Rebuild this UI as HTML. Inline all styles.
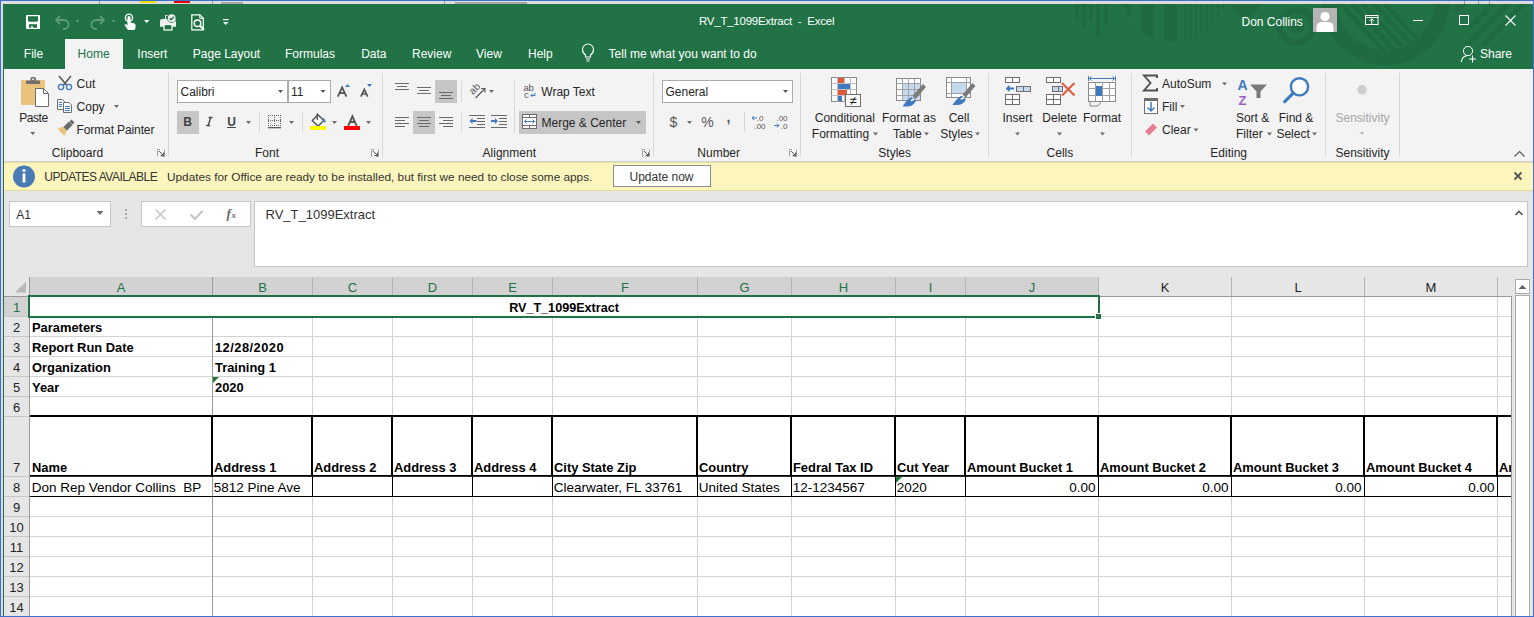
<!DOCTYPE html>
<html><head><meta charset="utf-8"><style>
*{margin:0;padding:0;box-sizing:border-box}
html,body{width:1534px;height:617px;overflow:hidden;background:#e6e6e6}
body{position:relative;font-family:"Liberation Sans",sans-serif;}
.t{position:absolute;white-space:pre}
.r{position:absolute}
svg{position:absolute;left:0;top:0;overflow:visible}
</style></head><body>
<div class="r" style="left:0px;top:0px;width:1534px;height:617px;background:#3f6fcf;"></div>
<div class="r" style="left:1px;top:1px;width:1532px;height:615px;background:#dcdcdc;"></div>
<div class="r" style="left:99px;top:1px;width:1px;height:3px;background:#9a9a9a;"></div>
<div class="r" style="left:212px;top:1px;width:1px;height:3px;background:#9a9a9a;"></div>
<div class="r" style="left:444px;top:1px;width:1px;height:3px;background:#9a9a9a;"></div>
<div class="r" style="left:1464px;top:1px;width:1px;height:3px;background:#9a9a9a;"></div>
<div class="r" style="left:1478px;top:1px;width:1px;height:3px;background:#9a9a9a;"></div>
<div class="r" style="left:1489px;top:1px;width:1px;height:3px;background:#9a9a9a;"></div>
<div class="r" style="left:140px;top:1px;width:16px;height:2px;background:#e8e000;"></div>
<div class="r" style="left:174px;top:1px;width:16px;height:2px;background:#e00000;"></div>
<div class="r" style="left:221px;top:2px;width:22px;height:2px;background:#a6a6a6;"></div>
<div class="r" style="left:455px;top:2px;width:72px;height:2px;background:#a6a6a6;"></div>
<div class="r" style="left:3px;top:4px;width:1530px;height:612px;background:#e6e6e6;"></div>
<div class="r" style="left:3px;top:4px;width:1px;height:612px;background:#217346;"></div>
<div class="r" style="left:3px;top:4px;width:1530px;height:65px;background:#217346;"></div>
<svg width="1534" height="69" style="clip-path:inset(4px 1px 0 3px)"><defs><clipPath id="cring"><circle cx="1386" cy="1" r="50"/></clipPath></defs><g fill="#1f6a40"><rect x="1075" y="4" width="4" height="16" /><rect x="1082" y="4" width="4" height="24" /><rect x="1089" y="4" width="4" height="17" /><rect x="1096" y="4" width="4" height="33" /><rect x="1104" y="4" width="4" height="21" /><rect x="1164" y="4" width="13" height="37" /><polygon points="1123,4 1131,4 1130,18" /><polygon points="1141,4 1154,4 1154,38 1141,31" /><rect x="1184.5" y="4" width="1.8" height="36" /><rect x="1189.5" y="4" width="1.8" height="35.5" /><rect x="1195" y="4" width="1.8" height="33" /><rect x="1200.5" y="4" width="1.8" height="30" /><rect x="1206" y="4" width="1.8" height="26" /><rect x="1211.5" y="4" width="1.8" height="22" /><rect x="1217" y="4" width="1.8" height="14" /><rect x="1222" y="4" width="1.8" height="6" /><circle cx="1245.5" cy="2.6" r="13.8" /><circle cx="1296.6" cy="26.3" r="16.5" fill="none" stroke="#1f6a40" stroke-width="6.5"/><circle cx="1296.6" cy="26.3" r="7" /><circle cx="1386" cy="1" r="56.5" fill="none" stroke="#1f6a40" stroke-width="15"/><polygon points="1338,4 1344,4 1388,52 1382,52" clip-path="url(#cring)"/><polygon points="1349,4 1355,4 1399,52 1393,52" clip-path="url(#cring)"/><polygon points="1360,4 1366,4 1410,52 1404,52" clip-path="url(#cring)"/><polygon points="1371,4 1377,4 1421,52 1415,52" clip-path="url(#cring)"/><polygon points="1382,4 1388,4 1432,52 1426,52" clip-path="url(#cring)"/><path d="M1455,12 L1470,-3" stroke="#1f6a40" stroke-width="5.5"/><path d="M1470,27 L1500,-3" stroke="#1f6a40" stroke-width="5.5"/><path d="M1467,45 L1513,-1" stroke="#1f6a40" stroke-width="5.5"/><path d="M1483,45 L1530,-2" stroke="#1f6a40" stroke-width="5.5"/></g></svg>
<svg width="1534" height="69"><rect x="26" y="15" width="14" height="14" rx="0.8" fill="#fff"/><path d="M28,16.2 h10 v4.6 l-1,1 h-8 l-1,-1 z" fill="#217346"/><rect x="29" y="24.2" width="8" height="3.6" fill="#217346"/><rect x="31" y="26.2" width="1.8" height="1.8" fill="#fff"/><path d="M57,20 h7 a4.5,4.5 0 0 1 0,9 h-1" fill="none" stroke="#5f9c78" stroke-width="1.8"/><path d="M60,16 l-4,4 l4,4" fill="none" stroke="#5f9c78" stroke-width="1.8"/><path d="M75.5,20 h4 l-2,2.5z" fill="#5f9c78"/><path d="M103,20 h-7 a4.5,4.5 0 0 0 0,9 h1" fill="none" stroke="#5f9c78" stroke-width="1.8"/><path d="M100,16 l4,4 l-4,4" fill="none" stroke="#5f9c78" stroke-width="1.8"/><path d="M111.5,20 h4 l-2,2.5z" fill="#5f9c78"/><circle cx="129" cy="17.7" r="3.6" fill="none" stroke="#fff" stroke-width="1.4"/><path d="M127.5,17.5 a1.5,1.5 0 0 1 3,0 v5 l4,1 q1,0.3 1,1.5 v3 l-1,2 h-6.5 l-3.5,-5 l1,-1 l2,1.3 z" fill="#fff"/><path d="M144,20 h5.5 l-2.75,3z" fill="#fff"/><path d="M160,21 q0,-2 2,-2 h12 q2,0 2,2 v5.8 h-16 z" fill="#eee"/><rect x="164" y="24.5" width="8" height="5.5" fill="#217346" stroke="#fff" stroke-width="1.2"/><path d="M165.5,19 v-3.5 h2" fill="none" stroke="#fff" stroke-width="1"/><circle cx="171.7" cy="18.2" r="4.6" fill="#217346"/><circle cx="171.7" cy="18.2" r="3.9" fill="#eee"/><path d="M169.6,18.3 l1.5,1.5 l2.8,-3" fill="none" stroke="#217346" stroke-width="1.3"/><path d="M191.8,14.8 h8 l3.5,3.5 v11.5 h-11.5 z" fill="none" stroke="#fff" stroke-width="1.2"/><path d="M199.8,14.8 v3.5 h3.5" fill="none" stroke="#fff" stroke-width="1"/><circle cx="197.5" cy="23.2" r="3.3" fill="#217346" stroke="#fff" stroke-width="1.5"/><path d="M200,25.8 l4,4" stroke="#fff" stroke-width="2"/><rect x="223" y="19" width="5.5" height="1.2" fill="#fff"/><path d="M223,22 h5.5 l-2.75,3z" fill="#fff"/><rect x="1313" y="8" width="24" height="24" fill="#b4b4b4"/><circle cx="1325" cy="16.5" r="4.6" fill="#fff"/><path d="M1316.5,32 v-5 q0,-4.5 5,-5 h7 q5,0.5 5,5 v5 z" fill="#fff"/><rect x="1365.5" y="15.5" width="12.5" height="9" fill="none" stroke="#fff" stroke-width="1"/><path d="M1365.5,17.5 h12.5" stroke="#fff" stroke-width="1"/><path d="M1371.75,24 v-5 M1369.5,21 l2.25,-2.25 l2.25,2.25" fill="none" stroke="#fff" stroke-width="1"/><path d="M1413,20.5 h10" stroke="#fff" stroke-width="1"/><rect x="1459.5" y="15.5" width="9" height="9" fill="none" stroke="#fff" stroke-width="1"/><path d="M1505.5,15.5 l10,10 M1515.5,15.5 l-10,10" stroke="#fff" stroke-width="1.1"/><circle cx="1468" cy="51" r="4.6" fill="none" stroke="#fff" stroke-width="1"/><path d="M1461.3,62 q0.5,-5.5 6,-6.5" fill="none" stroke="#fff" stroke-width="1.1"/><path d="M1469,59 h7 M1472.5,55.5 v7" stroke="#fff" stroke-width="1.1"/><path d="M585.5,57 v-2 q-3,-2 -3,-5.5 a5.5,5.5 0 0 1 11,0 q0,3.5 -3,5.5 v2 z" fill="none" stroke="#fff" stroke-width="1.1"/><path d="M586,59 h4 M586.5,61 h3" stroke="#fff" stroke-width="1"/></svg>
<div class="t" style="top:16.27px;font-size:11.5px;line-height:11.5px;color:#ffffff;left:699px;letter-spacing:-0.25px;">RV_T_1099Extract  -  Excel</div>
<div class="t" style="top:15.84px;font-size:12px;line-height:12px;color:#ffffff;left:1241.5px;">Don Collins</div>
<div class="r" style="left:65px;top:39px;width:58px;height:30px;background:#f3f3f3;"></div>
<div class="t" style="top:47.84px;font-size:12px;line-height:12px;color:#ffffff;left:23.8px;">File</div>
<div class="t" style="top:47.84px;font-size:12px;line-height:12px;color:#ffffff;left:137.3px;">Insert</div>
<div class="t" style="top:47.84px;font-size:12px;line-height:12px;color:#ffffff;left:192.8px;">Page Layout</div>
<div class="t" style="top:47.84px;font-size:12px;line-height:12px;color:#ffffff;left:285px;">Formulas</div>
<div class="t" style="top:47.84px;font-size:12px;line-height:12px;color:#ffffff;left:361.2px;">Data</div>
<div class="t" style="top:47.84px;font-size:12px;line-height:12px;color:#ffffff;left:412px;">Review</div>
<div class="t" style="top:47.84px;font-size:12px;line-height:12px;color:#ffffff;left:476px;">View</div>
<div class="t" style="top:47.84px;font-size:12px;line-height:12px;color:#ffffff;left:528px;">Help</div>
<div class="t" style="top:47.84px;font-size:12px;line-height:12px;color:#ffffff;left:608.6px;">Tell me what you want to do</div>
<div class="t" style="top:47.84px;font-size:12px;line-height:12px;color:#ffffff;left:1480px;">Share</div>
<div class="t" style="top:47.84px;font-size:12px;line-height:12px;color:#217346;left:77.6px;">Home</div>
<div class="r" style="left:4px;top:69px;width:1529px;height:92px;background:#f3f3f3;"></div>
<div class="r" style="left:4px;top:161px;width:1529px;height:1px;background:#d2d2d2;"></div>
<div class="r" style="left:4px;top:162px;width:1529px;height:28px;background:#fcf6bd;"></div>
<div class="r" style="left:4px;top:162px;width:1529px;height:1px;background:#e6e0a6;"></div>
<div class="r" style="left:4px;top:190px;width:1529px;height:1px;background:#e3dc9c;"></div>
<svg width="1534" height="200"><rect x="168" y="73" width="1" height="84" fill="#d8d8d8"/><rect x="382" y="73" width="1" height="84" fill="#d8d8d8"/><rect x="653" y="73" width="1" height="84" fill="#d8d8d8"/><rect x="800" y="73" width="1" height="84" fill="#d8d8d8"/><rect x="988" y="73" width="1" height="84" fill="#d8d8d8"/><rect x="1131" y="73" width="1" height="84" fill="#d8d8d8"/><rect x="1325" y="73" width="1" height="84" fill="#d8d8d8"/><rect x="1399" y="73" width="1" height="84" fill="#d8d8d8"/><rect x="259" y="112" width="1" height="20" fill="#d8d8d8"/><rect x="302" y="112" width="1" height="20" fill="#d8d8d8"/><rect x="461" y="81" width="1" height="21" fill="#d8d8d8"/><rect x="461" y="112" width="1" height="21" fill="#d8d8d8"/><rect x="514" y="80" width="1" height="53" fill="#d8d8d8"/><rect x="744" y="112" width="1" height="20" fill="#d8d8d8"/><path d="M157.5,149.5 h7 v7 h-7 z" fill="none" stroke="#8a8a8a" stroke-width="0.8" stroke-dasharray="2.5 4.5 7 0"/><path d="M159,151 l4.5,4.5 M163.5,152.5 v3 h-3" fill="none" stroke="#555" stroke-width="1"/><path d="M371.5,149.5 h7 v7 h-7 z" fill="none" stroke="#8a8a8a" stroke-width="0.8" stroke-dasharray="2.5 4.5 7 0"/><path d="M373,151 l4.5,4.5 M377.5,152.5 v3 h-3" fill="none" stroke="#555" stroke-width="1"/><path d="M642.5,149.5 h7 v7 h-7 z" fill="none" stroke="#8a8a8a" stroke-width="0.8" stroke-dasharray="2.5 4.5 7 0"/><path d="M644,151 l4.5,4.5 M648.5,152.5 v3 h-3" fill="none" stroke="#555" stroke-width="1"/><path d="M789.5,149.5 h7 v7 h-7 z" fill="none" stroke="#8a8a8a" stroke-width="0.8" stroke-dasharray="2.5 4.5 7 0"/><path d="M791,151 l4.5,4.5 M795.5,152.5 v3 h-3" fill="none" stroke="#555" stroke-width="1"/><rect x="21" y="80" width="24" height="25" rx="1.5" fill="#e9c27b"/><rect x="26" y="80.5" width="14" height="3.5" rx="0.5" fill="#707070"/><rect x="30.5" y="77" width="5.5" height="4" rx="1.5" fill="#707070"/><circle cx="33.2" cy="79.2" r="1" fill="#f3f3f3"/><path d="M35.5,88.5 h8 l5,5 v13 h-13 z" fill="#fff" stroke="#6e6e6e" stroke-width="1"/><path d="M43.5,88.5 v5 h5" fill="none" stroke="#6e6e6e" stroke-width="1"/><path d="M30.2,132 h5 l-2.5,3 z" fill="#6a6a6a"/><path d="M59,76 l7.5,9 M71,76 l-7.5,9" stroke="#5a5a5a" stroke-width="1.6"/><circle cx="61" cy="87" r="2.6" fill="#f3f3f3" stroke="#3f7ac0" stroke-width="1.3"/><circle cx="69" cy="87" r="2.6" fill="#f3f3f3" stroke="#3f7ac0" stroke-width="1.3"/><path d="M57.5,99.5 h5 l2,2 v8 h-7 z" fill="#fff" stroke="#6e6e6e" stroke-width="1"/><path d="M63.5,102.5 h5.5 l2.5,2.5 v7.5 h-8 z" fill="#fff" stroke="#6e6e6e" stroke-width="1"/><rect x="59" y="102" width="3" height="1" fill="#3f7ac0"/><rect x="59" y="104" width="3" height="1" fill="#3f7ac0"/><rect x="59" y="106" width="3" height="1" fill="#3f7ac0"/><rect x="65" y="106" width="5" height="1" fill="#3f7ac0"/><rect x="65" y="108" width="5" height="1" fill="#3f7ac0"/><rect x="65" y="110" width="5" height="1" fill="#3f7ac0"/><path d="M114,105 h5 l-2.5,3 z" fill="#6a6a6a"/><path d="M57.5,129 l6,-2.5 l3.5,3.5 l-2.5,6 z" fill="#e9c27b"/><path d="M63.5,127 l5.5,-5.5 l3.5,3.5 l-5.5,5.5 z" fill="#6a6a6a"/><path d="M69.5,121.5 l2,-2 l3,3 l-2,2 z" fill="#6a6a6a"/><rect x="177.5" y="80.5" width="110" height="22" fill="#fff" stroke="#ababab"/><rect x="288.5" y="80.5" width="42" height="22" fill="#fff" stroke="#ababab"/><path d="M278,90 h5 l-2.5,3 z" fill="#555"/><path d="M320.5,90 h5 l-2.5,3 z" fill="#555"/><path d="M337.8,96.7 l4.3,-9.4 l4.3,9.4 M339.5,93.2 h5.2" fill="none" stroke="#555" stroke-width="1.8"/><path d="M345,87 l2.5,-3 l2.5,3 z" fill="#3f7ac0"/><path d="M360.9,96.7 l3.4,-7.3 l3.4,7.3 M362.3,94 h4" fill="none" stroke="#555" stroke-width="1.7"/><path d="M367,84 h5 l-2.5,3 z" fill="#3f7ac0"/><rect x="177" y="111" width="22" height="23" fill="#c6c6c6"/><path d="M246,121 h5 l-2.5,3 z" fill="#6a6a6a"/><rect x="268" y="115" width="1" height="1" fill="#666"/><rect x="270" y="115" width="1" height="1" fill="#666"/><rect x="272" y="115" width="1" height="1" fill="#666"/><rect x="274" y="115" width="1" height="1" fill="#666"/><rect x="276" y="115" width="1" height="1" fill="#666"/><rect x="278" y="115" width="1" height="1" fill="#666"/><rect x="280" y="115" width="1" height="1" fill="#666"/><rect x="268" y="120" width="1" height="1" fill="#666"/><rect x="270" y="120" width="1" height="1" fill="#666"/><rect x="272" y="120" width="1" height="1" fill="#666"/><rect x="274" y="120" width="1" height="1" fill="#666"/><rect x="276" y="120" width="1" height="1" fill="#666"/><rect x="278" y="120" width="1" height="1" fill="#666"/><rect x="280" y="120" width="1" height="1" fill="#666"/><rect x="268" y="125" width="1" height="1" fill="#666"/><rect x="270" y="125" width="1" height="1" fill="#666"/><rect x="272" y="125" width="1" height="1" fill="#666"/><rect x="274" y="125" width="1" height="1" fill="#666"/><rect x="276" y="125" width="1" height="1" fill="#666"/><rect x="278" y="125" width="1" height="1" fill="#666"/><rect x="280" y="125" width="1" height="1" fill="#666"/><rect x="268" y="117" width="1" height="1" fill="#666"/><rect x="268" y="119" width="1" height="1" fill="#666"/><rect x="268" y="121" width="1" height="1" fill="#666"/><rect x="268" y="123" width="1" height="1" fill="#666"/><rect x="274" y="117" width="1" height="1" fill="#666"/><rect x="274" y="119" width="1" height="1" fill="#666"/><rect x="274" y="121" width="1" height="1" fill="#666"/><rect x="274" y="123" width="1" height="1" fill="#666"/><rect x="280" y="117" width="1" height="1" fill="#666"/><rect x="280" y="119" width="1" height="1" fill="#666"/><rect x="280" y="121" width="1" height="1" fill="#666"/><rect x="280" y="123" width="1" height="1" fill="#666"/><rect x="268" y="127" width="13" height="1.3" fill="#5a5a5a"/><path d="M289,121 h5 l-2.5,3 z" fill="#6a6a6a"/><path d="M312.3,120.5 l5.7,-5.7 l5.7,5.7 l-5.7,5.7 z" fill="#fff" stroke="#505050" stroke-width="1.4"/><path d="M317.2,113.5 v6.5" stroke="#505050" stroke-width="1.4"/><path d="M323,118 q3,1 2.5,5 q-1.5,-1.5 -2.5,-2 z" fill="#3f7ac0"/><rect x="310" y="126" width="16" height="4" fill="#ffff00"/><path d="M332,121 h5 l-2.5,3 z" fill="#6a6a6a"/><path d="M348.2,125.8 l4.2,-9.4 l4.2,9.4 M349.9,122 h5" fill="none" stroke="#555" stroke-width="1.9"/><rect x="344" y="126" width="16" height="4" fill="#ff0000"/><path d="M366,121 h5 l-2.5,3 z" fill="#6a6a6a"/><rect x="395" y="83" width="14" height="1" fill="#6a6a6a"/><rect x="397" y="86" width="10" height="1" fill="#6a6a6a"/><rect x="395" y="89" width="14" height="1" fill="#6a6a6a"/><rect x="417" y="87" width="14" height="1" fill="#6a6a6a"/><rect x="419" y="90" width="10" height="1" fill="#6a6a6a"/><rect x="417" y="93" width="14" height="1" fill="#6a6a6a"/><rect x="435" y="80" width="22" height="23" fill="#c6c6c6"/><rect x="439" y="92" width="14" height="1" fill="#6a6a6a"/><rect x="441" y="95" width="10" height="1" fill="#6a6a6a"/><rect x="439" y="98" width="14" height="1" fill="#6a6a6a"/><rect x="413" y="111" width="22" height="23" fill="#c6c6c6"/><rect x="395" y="117" width="14" height="1" fill="#6a6a6a"/><rect x="395" y="120" width="10" height="1" fill="#6a6a6a"/><rect x="395" y="123" width="14" height="1" fill="#6a6a6a"/><rect x="395" y="126" width="10" height="1" fill="#6a6a6a"/><rect x="417" y="117" width="14" height="1" fill="#6a6a6a"/><rect x="419" y="120" width="10" height="1" fill="#6a6a6a"/><rect x="417" y="123" width="14" height="1" fill="#6a6a6a"/><rect x="419" y="126" width="10" height="1" fill="#6a6a6a"/><rect x="439" y="117" width="14" height="1" fill="#6a6a6a"/><rect x="443" y="120" width="10" height="1" fill="#6a6a6a"/><rect x="439" y="123" width="14" height="1" fill="#6a6a6a"/><rect x="443" y="126" width="10" height="1" fill="#6a6a6a"/><text x="0" y="0" transform="translate(473,95) rotate(-45)" font-family="Liberation Sans" font-size="10" fill="#555">ab</text><path d="M475.5,98 l9,-9 M481,88.5 h4 v4" fill="none" stroke="#555" stroke-width="1.1"/><path d="M489,90 h5 l-2.5,3 z" fill="#6a6a6a"/><rect x="469" y="115" width="16" height="1" fill="#6a6a6a"/><rect x="477" y="118" width="8" height="1" fill="#6a6a6a"/><rect x="477" y="121" width="8" height="1" fill="#6a6a6a"/><rect x="477" y="124" width="8" height="1" fill="#6a6a6a"/><rect x="469" y="127" width="16" height="1" fill="#6a6a6a"/><path d="M469.5,121 l3,-3 v2 h4 v2 h-4 v2 z" fill="#3f7ac0"/><rect x="491" y="115" width="16" height="1" fill="#6a6a6a"/><rect x="499" y="118" width="8" height="1" fill="#6a6a6a"/><rect x="499" y="121" width="8" height="1" fill="#6a6a6a"/><rect x="499" y="124" width="8" height="1" fill="#6a6a6a"/><rect x="491" y="127" width="16" height="1" fill="#6a6a6a"/><path d="M498,121 l-3,-3 v2 h-4 v2 h4 v2 z" fill="#3f7ac0"/><text x="523.5" y="91" font-family="Liberation Sans" font-size="9.5" fill="#555" letter-spacing="-0.3">ab</text><text x="524" y="98" font-family="Liberation Sans" font-size="9.5" fill="#555">c</text><path d="M535,93 v2.5 h-4 M532.5,93.8 l-1.5,1.7 l1.5,1.7" fill="none" stroke="#3f7ac0" stroke-width="1"/><rect x="519" y="111" width="127" height="23" fill="#c6c6c6"/><rect x="522.5" y="114.5" width="14" height="14" fill="#fff" stroke="#6e6e6e"/><path d="M522.5,117.5 h14 M522.5,125.5 h14 M529.5,114.5 v3 M529.5,125.5 v3" stroke="#6e6e6e" stroke-width="1"/><path d="M524.5,121.5 h10" stroke="#3f7ac0" stroke-width="1"/><path d="M526.5,119.5 l-2,2 l2,2 M532.5,119.5 l2,2 l-2,2" fill="none" stroke="#3f7ac0" stroke-width="1"/><path d="M636,121 h5 l-2.5,3 z" fill="#555"/><rect x="662.5" y="80.5" width="130" height="22" fill="#fff" stroke="#ababab"/><path d="M783,90 h5 l-2.5,3 z" fill="#555"/><path d="M687,121 h5 l-2.5,3 z" fill="#6a6a6a"/><text x="760" y="121" text-anchor="middle" font-family="Liberation Sans" font-size="8" fill="#555">.0</text><text x="760" y="128.5" text-anchor="middle" font-family="Liberation Sans" font-size="8" fill="#555">.00</text><path d="M757,118 h-5 M754,116 l-2,2 l2,2" fill="none" stroke="#3f7ac0" stroke-width="1"/><text x="782" y="121" text-anchor="middle" font-family="Liberation Sans" font-size="8" fill="#555">.00</text><text x="784" y="128.5" text-anchor="middle" font-family="Liberation Sans" font-size="8" fill="#555">.0</text><path d="M774,125.5 h5 M777,123.5 l2,2 l-2,2" fill="none" stroke="#3f7ac0" stroke-width="1"/><rect x="831.5" y="77.5" width="25" height="24" fill="#fff" stroke="#8a8a8a"/><path d="M831.5,83.5 h25" stroke="#bdbdbd" stroke-width="1"/><path d="M831.5,89.5 h25" stroke="#bdbdbd" stroke-width="1"/><path d="M831.5,95.5 h25" stroke="#bdbdbd" stroke-width="1"/><path d="M837.5,77.5 v24" stroke="#bdbdbd" stroke-width="1"/><path d="M844.5,77.5 v24" stroke="#bdbdbd" stroke-width="1"/><path d="M850.5,77.5 v24" stroke="#bdbdbd" stroke-width="1"/><rect x="838" y="78" width="6" height="5" fill="#e0593a"/><rect x="838" y="84" width="12" height="5" fill="#3f7ac0"/><rect x="838" y="90" width="9" height="5" fill="#e0593a"/><rect x="838" y="96" width="4" height="5" fill="#3f7ac0"/><rect x="845.5" y="94.5" width="15" height="12" fill="#fff" stroke="#6e6e6e"/><text x="853" y="105" text-anchor="middle" font-family="Liberation Sans" font-size="13" fill="#222">&#8800;</text><path d="M873,132.5 h5 l-2.5,3 z" fill="#6a6a6a"/><rect x="896.5" y="78.5" width="24" height="22" fill="#fff" stroke="#8a8a8a"/><rect x="902" y="84" width="18" height="16" fill="#c5d9ee"/><path d="M896.5,83.5 h24" stroke="#a0a0a0" stroke-width="1"/><path d="M896.5,89.5 h24" stroke="#a0a0a0" stroke-width="1"/><path d="M896.5,95.5 h24" stroke="#a0a0a0" stroke-width="1"/><path d="M902.5,78.5 v22" stroke="#a0a0a0" stroke-width="1"/><path d="M908.5,78.5 v22" stroke="#a0a0a0" stroke-width="1"/><path d="M914.5,78.5 v22" stroke="#a0a0a0" stroke-width="1"/><path d="M912.5,96 l10.5,-12 l3,3 l-10.5,12 z" fill="#7a7a7a"/><path d="M902.5,106.5 q4,-6.5 9,-9.5 l4.5,4 q-3,5.5 -9,5.5 z" fill="#3f7ac0"/><path d="M910.5,100 q1.5,-1.5 3,-1.5 l0.8,1.5 q-2,0.5 -3,1.5 z" fill="#fff"/><path d="M924,132.5 h5 l-2.5,3 z" fill="#6a6a6a"/><rect x="946.5" y="77.5" width="24" height="20" fill="#fff" stroke="#8a8a8a"/><rect x="951" y="82" width="15" height="11" fill="#c5d9ee"/><path d="M946.5,82.5 h24 M946.5,93.5 h24 M951.5,77.5 v20 M966.5,77.5 v20" stroke="#a0a0a0" stroke-width="1"/><path d="M962.5,94.5 l10,-11.5 l3,3 l-10,11.5 z" fill="#7a7a7a"/><path d="M952.5,105 q4,-6.5 9,-9.5 l4.5,4 q-3,5.5 -9,5.5 z" fill="#3f7ac0"/><path d="M960.5,98.5 q1.5,-1.5 3,-1.5 l0.8,1.5 q-2,0.5 -3,1.5 z" fill="#fff"/><path d="M975,132.5 h5 l-2.5,3 z" fill="#6a6a6a"/><rect x="1005.5" y="77.5" width="7" height="5" fill="#fff" stroke="#6e6e6e"/><rect x="1012.5" y="77.5" width="7" height="5" fill="#fff" stroke="#6e6e6e"/><rect x="1016.5" y="86.5" width="7" height="5" fill="#c5d9ee" stroke="#6e6e6e"/><rect x="1023.5" y="86.5" width="7" height="5" fill="#c5d9ee" stroke="#6e6e6e"/><path d="M1007,88.5 h7 M1009.5,86 l-2.5,2.5 l2.5,2.5" fill="none" stroke="#3f7ac0" stroke-width="1.8"/><rect x="1005.5" y="94.5" width="7" height="5" fill="#fff" stroke="#6e6e6e"/><rect x="1012.5" y="94.5" width="7" height="5" fill="#fff" stroke="#6e6e6e"/><rect x="1005.5" y="99.5" width="7" height="5" fill="#fff" stroke="#6e6e6e"/><rect x="1012.5" y="99.5" width="7" height="5" fill="#fff" stroke="#6e6e6e"/><path d="M1015,132.5 h5 l-2.5,3 z" fill="#6a6a6a"/><rect x="1046.5" y="77.5" width="7" height="5" fill="#fff" stroke="#6e6e6e"/><rect x="1053.5" y="77.5" width="7" height="5" fill="#fff" stroke="#6e6e6e"/><rect x="1052.5" y="86.5" width="6" height="5" fill="#c5d9ee" stroke="#6e6e6e"/><rect x="1058.5" y="86.5" width="4" height="5" fill="#c5d9ee" stroke="#6e6e6e"/><rect x="1046.5" y="94.5" width="7" height="5" fill="#fff" stroke="#6e6e6e"/><rect x="1053.5" y="94.5" width="7" height="5" fill="#fff" stroke="#6e6e6e"/><rect x="1046.5" y="99.5" width="7" height="5" fill="#fff" stroke="#6e6e6e"/><rect x="1053.5" y="99.5" width="7" height="5" fill="#fff" stroke="#6e6e6e"/><path d="M1062,83 l12.5,12.5 M1074.5,83 l-12.5,12.5" stroke="#e05a3a" stroke-width="2"/><path d="M1057,132.5 h5 l-2.5,3 z" fill="#6a6a6a"/><rect x="1088.5" y="82.5" width="27" height="19" fill="#fff" stroke="#8a8a8a"/><path d="M1088.5,88.5 h27 M1088.5,95.5 h27 M1095.5,82.5 v19 M1102.5,82.5 v19 M1109.5,82.5 v19" stroke="#a0a0a0" stroke-width="1"/><rect x="1096" y="86" width="6" height="10" fill="#3f7ac0"/><path d="M1090,102 v4 h8 l3,-4" fill="none" stroke="#8a8a8a"/><path d="M1088.5,76 v5 M1115.5,76 v5 M1089,78.5 h26 M1091.5,76.5 l-2,2 l2,2 M1112.5,76.5 l2,2 l-2,2" fill="none" stroke="#3f7ac0" stroke-width="1"/><path d="M1100,132.5 h5 l-2.5,3 z" fill="#6a6a6a"/><path d="M1157,78 v-2.5 h-13 l6.5,7.5 l-6.5,7.5 h13 v-2.5" fill="none" stroke="#505050" stroke-width="1.9"/><path d="M1222,82.5 h5 l-2.5,3 z" fill="#6a6a6a"/><rect x="1144.5" y="98.5" width="13" height="15" fill="#fff" stroke="#6e6e6e"/><rect x="1144" y="98" width="14" height="3" fill="#6e6e6e"/><path d="M1151,102 v9 M1147.5,107.5 l3.5,3.5 l3.5,-3.5" fill="none" stroke="#3f7ac0" stroke-width="1.5"/><path d="M1180,105 h5 l-2.5,3 z" fill="#6a6a6a"/><path d="M1145,131.5 l8,-8 l4,4 l-8,8 z" fill="#e87e93"/><path d="M1193.5,128.5 h5 l-2.5,3 z" fill="#6a6a6a"/><text x="1237.5" y="90" font-family="Liberation Sans" font-weight="bold" font-size="14" fill="#3f7ac0">A</text><text x="1238.5" y="104.5" font-family="Liberation Sans" font-weight="bold" font-size="13" fill="#9a5fc6">Z</text><path d="M1250,84.5 h17 l-6.5,7 v6.5 h-4 v-6.5 z" fill="#7a7a7a"/><path d="M1267,132.5 h5 l-2.5,3 z" fill="#6a6a6a"/><circle cx="1299.5" cy="86.8" r="8.6" fill="#fff" stroke="#3f7ac0" stroke-width="2.4"/><path d="M1293.2,93.2 l-8.5,8.5" stroke="#3f7ac0" stroke-width="3.2" stroke-linecap="round"/><path d="M1312,132.5 h5 l-2.5,3 z" fill="#6a6a6a"/><circle cx="1362" cy="89.8" r="4.8" fill="#cfcfcf"/><path d="M1359.5,132 h5 l-2.5,3 z" fill="#bdbdbd"/><path d="M1514.5,156.5 l5,-5 l5,5" fill="none" stroke="#555" stroke-width="1.1"/><circle cx="24" cy="176.5" r="11" fill="#4a7bb5"/><circle cx="24" cy="170.5" r="1.6" fill="#fff"/><rect x="22.6" y="173.5" width="2.8" height="9" fill="#fff"/><rect x="613.5" y="165.5" width="97" height="21" fill="#fff" stroke="#8f8f8f"/><path d="M1514.5,172.5 l7,7 M1521.5,172.5 l-7,7" stroke="#555" stroke-width="1.8"/></svg>
<div class="t" style="top:111.84px;font-size:12px;line-height:12px;color:#262626;left:19.2px;letter-spacing:-0.45px;">Paste</div>
<div class="t" style="top:77.84px;font-size:12px;line-height:12px;color:#262626;left:76.6px;">Cut</div>
<div class="t" style="top:100.84px;font-size:12px;line-height:12px;color:#262626;left:76.6px;">Copy</div>
<div class="t" style="top:123.84px;font-size:12px;line-height:12px;color:#262626;left:76.6px;letter-spacing:-0.12px;">Format Painter</div>
<div class="t" style="top:146.84px;font-size:12px;line-height:12px;color:#262626;left:-222.6px;width:600px;text-align:center;">Clipboard</div>
<div class="t" style="top:85.84px;font-size:12px;line-height:12px;color:#262626;left:180.5px;">Calibri</div>
<div class="t" style="top:85.84px;font-size:12px;line-height:12px;color:#262626;left:291px;">11</div>
<div class="t" style="top:115.84px;font-size:12px;line-height:12px;color:#444;font-weight:700;left:-112.5px;width:600px;text-align:center;">B</div>
<svg width="1534" height="200"><path d="M210.6,117.6 l-2.4,8 M208.6,117.6 h4 M206.2,125.6 h4" fill="none" stroke="#4a4a4a" stroke-width="1.5"/></svg>
<div class="t" style="top:115.84px;font-size:12px;line-height:12px;color:#444;font-weight:700;left:-68.5px;width:600px;text-align:center;text-decoration:underline;">U</div>
<div class="t" style="top:146.84px;font-size:12px;line-height:12px;color:#262626;left:-33px;width:600px;text-align:center;">Font</div>
<div class="t" style="top:85.84px;font-size:12px;line-height:12px;color:#262626;left:541.3px;">Wrap Text</div>
<div class="t" style="top:116.84px;font-size:12px;line-height:12px;color:#262626;left:541.5px;">Merge &amp; Center</div>
<div class="t" style="top:146.84px;font-size:12px;line-height:12px;color:#262626;left:209.3px;width:600px;text-align:center;">Alignment</div>
<div class="t" style="top:85.84px;font-size:12px;line-height:12px;color:#262626;left:665.5px;">General</div>
<div class="t" style="top:115.15px;font-size:14px;line-height:14px;color:#555;left:373.4px;width:600px;text-align:center;">$</div>
<div class="t" style="top:115.15px;font-size:14px;line-height:14px;color:#555;left:407.6px;width:600px;text-align:center;">%</div>
<div class="t" style="top:110.15px;font-size:14px;line-height:14px;color:#555;font-weight:700;left:428.5px;width:600px;text-align:center;">,</div>
<div class="t" style="top:146.84px;font-size:12px;line-height:12px;color:#262626;left:418.70000000000005px;width:600px;text-align:center;">Number</div>
<div class="t" style="top:111.84px;font-size:12px;line-height:12px;color:#262626;left:544.8px;width:600px;text-align:center;">Conditional</div>
<div class="t" style="top:127.84px;font-size:12px;line-height:12px;color:#262626;left:811.8px;">Formatting</div>
<div class="t" style="top:111.84px;font-size:12px;line-height:12px;color:#262626;left:609px;width:600px;text-align:center;">Format as</div>
<div class="t" style="top:127.84px;font-size:12px;line-height:12px;color:#262626;left:893px;">Table</div>
<div class="t" style="top:111.84px;font-size:12px;line-height:12px;color:#262626;left:659px;width:600px;text-align:center;">Cell</div>
<div class="t" style="top:127.84px;font-size:12px;line-height:12px;color:#262626;left:940.2px;">Styles</div>
<div class="t" style="top:146.84px;font-size:12px;line-height:12px;color:#262626;left:594.7px;width:600px;text-align:center;">Styles</div>
<div class="t" style="top:111.84px;font-size:12px;line-height:12px;color:#262626;left:717.5px;width:600px;text-align:center;">Insert</div>
<div class="t" style="top:111.84px;font-size:12px;line-height:12px;color:#262626;left:759.7px;width:600px;text-align:center;">Delete</div>
<div class="t" style="top:111.84px;font-size:12px;line-height:12px;color:#262626;left:802px;width:600px;text-align:center;">Format</div>
<div class="t" style="top:146.84px;font-size:12px;line-height:12px;color:#262626;left:759.9000000000001px;width:600px;text-align:center;">Cells</div>
<div class="t" style="top:77.84px;font-size:12px;line-height:12px;color:#262626;left:1162px;">AutoSum</div>
<div class="t" style="top:100.84px;font-size:12px;line-height:12px;color:#262626;left:1162px;">Fill</div>
<div class="t" style="top:123.84px;font-size:12px;line-height:12px;color:#262626;left:1162px;">Clear</div>
<div class="t" style="top:146.84px;font-size:12px;line-height:12px;color:#262626;left:928.7px;width:600px;text-align:center;">Editing</div>
<div class="t" style="top:111.84px;font-size:12px;line-height:12px;color:#262626;left:952.5999999999999px;width:600px;text-align:center;">Sort &amp;</div>
<div class="t" style="top:127.84px;font-size:12px;line-height:12px;color:#262626;left:1236px;">Filter</div>
<div class="t" style="top:111.84px;font-size:12px;line-height:12px;color:#262626;left:996px;width:600px;text-align:center;">Find &amp;</div>
<div class="t" style="top:127.84px;font-size:12px;line-height:12px;color:#262626;left:1276.4px;">Select</div>
<div class="t" style="top:111.84px;font-size:12px;line-height:12px;color:#a6a6a6;left:1062.5px;width:600px;text-align:center;">Sensitivity</div>
<div class="t" style="top:146.84px;font-size:12px;line-height:12px;color:#262626;left:1062.5px;width:600px;text-align:center;">Sensitivity</div>
<div class="t" style="top:171.34px;font-size:12px;line-height:12px;color:#333;left:44.3px;letter-spacing:-0.5px;">UPDATES AVAILABLE</div>
<div class="t" style="top:171.51px;font-size:11.8px;line-height:11.8px;color:#333;left:167px;">Updates for Office are ready to be installed, but first we need to close some apps.</div>
<div class="t" style="top:171.34px;font-size:12px;line-height:12px;color:#333;left:361.5px;width:600px;text-align:center;">Update now</div>
<svg width="1534" height="617"><rect x="9.5" y="201.5" width="101" height="25" fill="#fff" stroke="#c6c6c6"/><path d="M96.5,211 h7 l-3.5,4 z" fill="#6a6a6a"/><rect x="125" y="209.0" width="2" height="2" fill="#a8a8a8"/><rect x="125" y="213.0" width="2" height="2" fill="#a8a8a8"/><rect x="125" y="217.0" width="2" height="2" fill="#a8a8a8"/><rect x="141.5" y="201.5" width="109" height="25" fill="#fff" stroke="#c6c6c6"/><path d="M155.5,209.5 l10,10 M165.5,209.5 l-10,10" stroke="#c4c4c4" stroke-width="1.5"/><path d="M190.5,214.5 l4.5,4.5 l7.5,-8" fill="none" stroke="#c4c4c4" stroke-width="2.2"/><text x="226.5" y="218" font-family="Liberation Serif" font-style="italic" font-weight="bold" font-size="13" fill="#666">f</text><text x="231.5" y="218" font-family="Liberation Serif" font-style="italic" font-weight="bold" font-size="9" fill="#666">x</text><rect x="254.5" y="201.5" width="1273" height="65" fill="#fff" stroke="#c6c6c6"/><path d="M1515.5,215 l3.5,-3.5 l3.5,3.5" fill="none" stroke="#555" stroke-width="1.6"/><rect x="4" y="277" width="1507" height="19" fill="#e6e6e6"/><rect x="30" y="277" width="1068" height="18" fill="#d2d2d2"/><rect x="4" y="297" width="25" height="319" fill="#e6e6e6"/><rect x="4" y="297" width="25" height="19" fill="#d2d2d2"/><path d="M26,281.5 v11 h-11 z" fill="#b9b9b9"/><rect x="30" y="297" width="1481" height="319" fill="#fff"/><rect x="212" y="277" width="1" height="19" fill="#b4b4b4"/><rect x="312" y="277" width="1" height="19" fill="#b4b4b4"/><rect x="392" y="277" width="1" height="19" fill="#b4b4b4"/><rect x="472" y="277" width="1" height="19" fill="#b4b4b4"/><rect x="552" y="277" width="1" height="19" fill="#b4b4b4"/><rect x="697" y="277" width="1" height="19" fill="#b4b4b4"/><rect x="791" y="277" width="1" height="19" fill="#b4b4b4"/><rect x="895" y="277" width="1" height="19" fill="#b4b4b4"/><rect x="965" y="277" width="1" height="19" fill="#b4b4b4"/><rect x="1098" y="277" width="1" height="19" fill="#b4b4b4"/><rect x="1231" y="277" width="1" height="19" fill="#b4b4b4"/><rect x="1364" y="277" width="1" height="19" fill="#b4b4b4"/><rect x="1497" y="277" width="1" height="19" fill="#b4b4b4"/><rect x="4" y="316" width="25" height="1" fill="#c8c8c8"/><rect x="4" y="336" width="25" height="1" fill="#c8c8c8"/><rect x="4" y="356" width="25" height="1" fill="#c8c8c8"/><rect x="4" y="376" width="25" height="1" fill="#c8c8c8"/><rect x="4" y="396" width="25" height="1" fill="#c8c8c8"/><rect x="4" y="416" width="25" height="1" fill="#c8c8c8"/><rect x="4" y="476" width="25" height="1" fill="#c8c8c8"/><rect x="4" y="496" width="25" height="1" fill="#c8c8c8"/><rect x="4" y="516" width="25" height="1" fill="#c8c8c8"/><rect x="4" y="536" width="25" height="1" fill="#c8c8c8"/><rect x="4" y="556" width="25" height="1" fill="#c8c8c8"/><rect x="4" y="576" width="25" height="1" fill="#c8c8c8"/><rect x="4" y="596" width="25" height="1" fill="#c8c8c8"/><rect x="4" y="616" width="25" height="1" fill="#c8c8c8"/><rect x="29" y="277" width="1" height="339" fill="#9a9a9a"/><rect x="4" y="296" width="1507" height="1" fill="#9a9a9a"/><rect x="1511" y="296" width="1" height="320" fill="#9a9a9a"/><rect x="212" y="297" width="1" height="319" fill="#d4d4d4"/><rect x="312" y="297" width="1" height="319" fill="#d4d4d4"/><rect x="392" y="297" width="1" height="319" fill="#d4d4d4"/><rect x="472" y="297" width="1" height="319" fill="#d4d4d4"/><rect x="552" y="297" width="1" height="319" fill="#d4d4d4"/><rect x="697" y="297" width="1" height="319" fill="#d4d4d4"/><rect x="791" y="297" width="1" height="319" fill="#d4d4d4"/><rect x="895" y="297" width="1" height="319" fill="#d4d4d4"/><rect x="965" y="297" width="1" height="319" fill="#d4d4d4"/><rect x="1098" y="297" width="1" height="319" fill="#d4d4d4"/><rect x="1231" y="297" width="1" height="319" fill="#d4d4d4"/><rect x="1364" y="297" width="1" height="319" fill="#d4d4d4"/><rect x="1497" y="297" width="1" height="319" fill="#d4d4d4"/><rect x="30" y="316" width="1481" height="1" fill="#d4d4d4"/><rect x="30" y="336" width="1481" height="1" fill="#d4d4d4"/><rect x="30" y="356" width="1481" height="1" fill="#d4d4d4"/><rect x="30" y="376" width="1481" height="1" fill="#d4d4d4"/><rect x="30" y="396" width="1481" height="1" fill="#d4d4d4"/><rect x="30" y="416" width="1481" height="1" fill="#d4d4d4"/><rect x="30" y="476" width="1481" height="1" fill="#d4d4d4"/><rect x="30" y="496" width="1481" height="1" fill="#d4d4d4"/><rect x="30" y="516" width="1481" height="1" fill="#d4d4d4"/><rect x="30" y="536" width="1481" height="1" fill="#d4d4d4"/><rect x="30" y="556" width="1481" height="1" fill="#d4d4d4"/><rect x="30" y="576" width="1481" height="1" fill="#d4d4d4"/><rect x="30" y="596" width="1481" height="1" fill="#d4d4d4"/><rect x="30" y="616" width="1481" height="1" fill="#d4d4d4"/><rect x="212" y="277" width="1" height="339" fill="#9b9b9b"/><rect x="30" y="297" width="1068" height="19" fill="#fff"/><rect x="30" y="415" width="1481" height="2" fill="#000"/><rect x="30" y="475" width="1481" height="1" fill="#000"/><rect x="30" y="476" width="1481" height="1" fill="#333"/><rect x="30" y="496" width="1481" height="1" fill="#000"/><rect x="211" y="415" width="2" height="62" fill="#000"/><rect x="212" y="477" width="1" height="19" fill="#000"/><rect x="311" y="415" width="2" height="62" fill="#000"/><rect x="312" y="477" width="1" height="19" fill="#000"/><rect x="391" y="415" width="2" height="62" fill="#000"/><rect x="392" y="477" width="1" height="19" fill="#000"/><rect x="471" y="415" width="2" height="62" fill="#000"/><rect x="472" y="477" width="1" height="19" fill="#000"/><rect x="551" y="415" width="2" height="62" fill="#000"/><rect x="552" y="477" width="1" height="19" fill="#000"/><rect x="696" y="415" width="2" height="62" fill="#000"/><rect x="697" y="477" width="1" height="19" fill="#000"/><rect x="790" y="415" width="2" height="62" fill="#000"/><rect x="791" y="477" width="1" height="19" fill="#000"/><rect x="894" y="415" width="2" height="62" fill="#000"/><rect x="895" y="477" width="1" height="19" fill="#000"/><rect x="964" y="415" width="2" height="62" fill="#000"/><rect x="965" y="477" width="1" height="19" fill="#000"/><rect x="1097" y="415" width="2" height="62" fill="#000"/><rect x="1098" y="477" width="1" height="19" fill="#000"/><rect x="1230" y="415" width="2" height="62" fill="#000"/><rect x="1231" y="477" width="1" height="19" fill="#000"/><rect x="1363" y="415" width="2" height="62" fill="#000"/><rect x="1364" y="477" width="1" height="19" fill="#000"/><rect x="1496" y="415" width="2" height="62" fill="#000"/><rect x="1497" y="477" width="1" height="19" fill="#000"/><rect x="212" y="477" width="1" height="19" fill="#9b9b9b"/><path d="M213,377 h6 l-6,6 z" fill="#1f7a3a"/><path d="M896,477 h6 l-6,6 z" fill="#1f7a3a"/><rect x="28" y="295" width="1072" height="2" fill="#217346"/><rect x="28" y="295" width="2" height="23" fill="#217346"/><rect x="28" y="316" width="1067" height="2" fill="#217346"/><rect x="1098" y="295" width="2" height="18" fill="#217346"/><rect x="1095" y="313" width="6" height="6" fill="#fff"/><rect x="1096" y="314" width="5" height="5" fill="#217346"/><rect x="1515.5" y="279.5" width="14" height="14" fill="#fff" stroke="#ababab"/><path d="M1518.5,289 l4,-4 l4,4 z" fill="#606060"/><rect x="1515.5" y="295.5" width="14" height="330" fill="#fff" stroke="#ababab"/></svg>
<div class="t" style="top:208.84px;font-size:12px;line-height:12px;color:#333;left:16.2px;">A1</div>
<div class="t" style="top:207.60px;font-size:13px;line-height:13px;color:#333;left:265.5px;">RV_T_1099Extract</div>
<div class="t" style="top:281.00px;font-size:13px;line-height:13px;color:#217346;left:-179.0px;width:600px;text-align:center;">A</div>
<div class="t" style="top:281.00px;font-size:13px;line-height:13px;color:#217346;left:-37.5px;width:600px;text-align:center;">B</div>
<div class="t" style="top:281.00px;font-size:13px;line-height:13px;color:#217346;left:52.5px;width:600px;text-align:center;">C</div>
<div class="t" style="top:281.00px;font-size:13px;line-height:13px;color:#217346;left:132.5px;width:600px;text-align:center;">D</div>
<div class="t" style="top:281.00px;font-size:13px;line-height:13px;color:#217346;left:212.5px;width:600px;text-align:center;">E</div>
<div class="t" style="top:281.00px;font-size:13px;line-height:13px;color:#217346;left:325.0px;width:600px;text-align:center;">F</div>
<div class="t" style="top:281.00px;font-size:13px;line-height:13px;color:#217346;left:444.5px;width:600px;text-align:center;">G</div>
<div class="t" style="top:281.00px;font-size:13px;line-height:13px;color:#217346;left:543.5px;width:600px;text-align:center;">H</div>
<div class="t" style="top:281.00px;font-size:13px;line-height:13px;color:#217346;left:630.5px;width:600px;text-align:center;">I</div>
<div class="t" style="top:281.00px;font-size:13px;line-height:13px;color:#217346;left:732.0px;width:600px;text-align:center;">J</div>
<div class="t" style="top:281.00px;font-size:13px;line-height:13px;color:#222;left:865.0px;width:600px;text-align:center;">K</div>
<div class="t" style="top:281.00px;font-size:13px;line-height:13px;color:#222;left:998.0px;width:600px;text-align:center;">L</div>
<div class="t" style="top:281.00px;font-size:13px;line-height:13px;color:#222;left:1131.0px;width:600px;text-align:center;">M</div>
<div class="t" style="top:301.00px;font-size:13px;line-height:13px;color:#217346;left:-283.5px;width:600px;text-align:center;">1</div>
<div class="t" style="top:321.00px;font-size:13px;line-height:13px;color:#222;left:-283.5px;width:600px;text-align:center;">2</div>
<div class="t" style="top:341.00px;font-size:13px;line-height:13px;color:#222;left:-283.5px;width:600px;text-align:center;">3</div>
<div class="t" style="top:361.00px;font-size:13px;line-height:13px;color:#222;left:-283.5px;width:600px;text-align:center;">4</div>
<div class="t" style="top:381.00px;font-size:13px;line-height:13px;color:#222;left:-283.5px;width:600px;text-align:center;">5</div>
<div class="t" style="top:401.00px;font-size:13px;line-height:13px;color:#222;left:-283.5px;width:600px;text-align:center;">6</div>
<div class="t" style="top:461.00px;font-size:13px;line-height:13px;color:#222;left:-283.5px;width:600px;text-align:center;">7</div>
<div class="t" style="top:481.00px;font-size:13px;line-height:13px;color:#222;left:-283.5px;width:600px;text-align:center;">8</div>
<div class="t" style="top:501.00px;font-size:13px;line-height:13px;color:#222;left:-283.5px;width:600px;text-align:center;">9</div>
<div class="t" style="top:521.00px;font-size:13px;line-height:13px;color:#222;left:-283.5px;width:600px;text-align:center;">10</div>
<div class="t" style="top:541.00px;font-size:13px;line-height:13px;color:#222;left:-283.5px;width:600px;text-align:center;">11</div>
<div class="t" style="top:561.00px;font-size:13px;line-height:13px;color:#222;left:-283.5px;width:600px;text-align:center;">12</div>
<div class="t" style="top:581.00px;font-size:13px;line-height:13px;color:#222;left:-283.5px;width:600px;text-align:center;">13</div>
<div class="t" style="top:601.00px;font-size:13px;line-height:13px;color:#222;left:-283.5px;width:600px;text-align:center;">14</div>
<div class="t" style="top:302.33px;font-size:12.6px;line-height:12.6px;color:#000;font-weight:700;left:264px;width:600px;text-align:center;">RV_T_1099Extract</div>
<div class="t" style="top:322.08px;font-size:12.9px;line-height:12.9px;color:#000;font-weight:700;left:32px;">Parameters</div>
<div class="t" style="top:342.08px;font-size:12.9px;line-height:12.9px;color:#000;font-weight:700;left:32px;">Report Run Date</div>
<div class="t" style="top:342.08px;font-size:12.9px;line-height:12.9px;color:#000;font-weight:700;left:215px;letter-spacing:0.45px;">12/28/2020</div>
<div class="t" style="top:362.08px;font-size:12.9px;line-height:12.9px;color:#000;font-weight:700;left:32px;">Organization</div>
<div class="t" style="top:362.08px;font-size:12.9px;line-height:12.9px;color:#000;font-weight:700;left:215px;">Training 1</div>
<div class="t" style="top:382.08px;font-size:12.9px;line-height:12.9px;color:#000;font-weight:700;left:32px;">Year</div>
<div class="t" style="top:382.08px;font-size:12.9px;line-height:12.9px;color:#000;font-weight:700;left:215px;">2020</div>
<div class="t" style="top:462.08px;font-size:12.9px;line-height:12.9px;color:#000;font-weight:700;left:32px;">Name</div>
<div class="t" style="top:462.08px;font-size:12.9px;line-height:12.9px;color:#000;font-weight:700;left:214px;">Address 1</div>
<div class="t" style="top:462.08px;font-size:12.9px;line-height:12.9px;color:#000;font-weight:700;left:314px;">Address 2</div>
<div class="t" style="top:462.08px;font-size:12.9px;line-height:12.9px;color:#000;font-weight:700;left:394px;">Address 3</div>
<div class="t" style="top:462.08px;font-size:12.9px;line-height:12.9px;color:#000;font-weight:700;left:474px;">Address 4</div>
<div class="t" style="top:462.08px;font-size:12.9px;line-height:12.9px;color:#000;font-weight:700;left:554px;">City State Zip</div>
<div class="t" style="top:462.08px;font-size:12.9px;line-height:12.9px;color:#000;font-weight:700;left:699px;">Country</div>
<div class="t" style="top:462.08px;font-size:12.9px;line-height:12.9px;color:#000;font-weight:700;left:793px;">Fedral Tax ID</div>
<div class="t" style="top:462.08px;font-size:12.9px;line-height:12.9px;color:#000;font-weight:700;left:897px;">Cut Year</div>
<div class="t" style="top:462.08px;font-size:12.9px;line-height:12.9px;color:#000;font-weight:700;left:967px;">Amount Bucket 1</div>
<div class="t" style="top:462.08px;font-size:12.9px;line-height:12.9px;color:#000;font-weight:700;left:1100px;">Amount Bucket 2</div>
<div class="t" style="top:462.08px;font-size:12.9px;line-height:12.9px;color:#000;font-weight:700;left:1233px;">Amount Bucket 3</div>
<div class="t" style="top:462.08px;font-size:12.9px;line-height:12.9px;color:#000;font-weight:700;left:1366px;">Amount Bucket 4</div>
<div style="position:absolute;left:1498px;top:417px;width:13px;height:58px;overflow:hidden"><div class="t" style="top:45.08px;font-size:12.9px;line-height:12.9px;color:#000;font-weight:700;left:1px;">Amount Bucket 5</div></div>
<div class="t" style="top:480.57px;font-size:13.5px;line-height:13.5px;color:#000;left:31.7px;">Don Rep Vendor Collins  BP</div>
<div class="t" style="top:480.57px;font-size:13.5px;line-height:13.5px;color:#000;left:213.7px;">5812 Pine Ave</div>
<div class="t" style="top:480.57px;font-size:13.5px;line-height:13.5px;color:#000;left:553.7px;">Clearwater, FL 33761</div>
<div class="t" style="top:480.57px;font-size:13.5px;line-height:13.5px;color:#000;left:698.7px;">United States</div>
<div class="t" style="top:480.57px;font-size:13.5px;line-height:13.5px;color:#000;left:792.7px;">12-1234567</div>
<div class="t" style="top:480.57px;font-size:13.5px;line-height:13.5px;color:#000;left:896.7px;">2020</div>
<div class="t" style="top:480.57px;font-size:13.5px;line-height:13.5px;color:#000;left:495.5px;width:600px;text-align:right;">0.00</div>
<div class="t" style="top:480.57px;font-size:13.5px;line-height:13.5px;color:#000;left:628.5px;width:600px;text-align:right;">0.00</div>
<div class="t" style="top:480.57px;font-size:13.5px;line-height:13.5px;color:#000;left:761.5px;width:600px;text-align:right;">0.00</div>
<div class="t" style="top:480.57px;font-size:13.5px;line-height:13.5px;color:#000;left:894.5px;width:600px;text-align:right;">0.00</div>
<div class="r" style="left:0px;top:616px;width:1534px;height:1px;background:#3f6fcf;"></div>
<div class="r" style="left:1533px;top:0px;width:1px;height:617px;background:#3f6fcf;"></div>
<div class="r" style="left:0px;top:0px;width:1px;height:617px;background:#3f6fcf;"></div>
</body></html>
